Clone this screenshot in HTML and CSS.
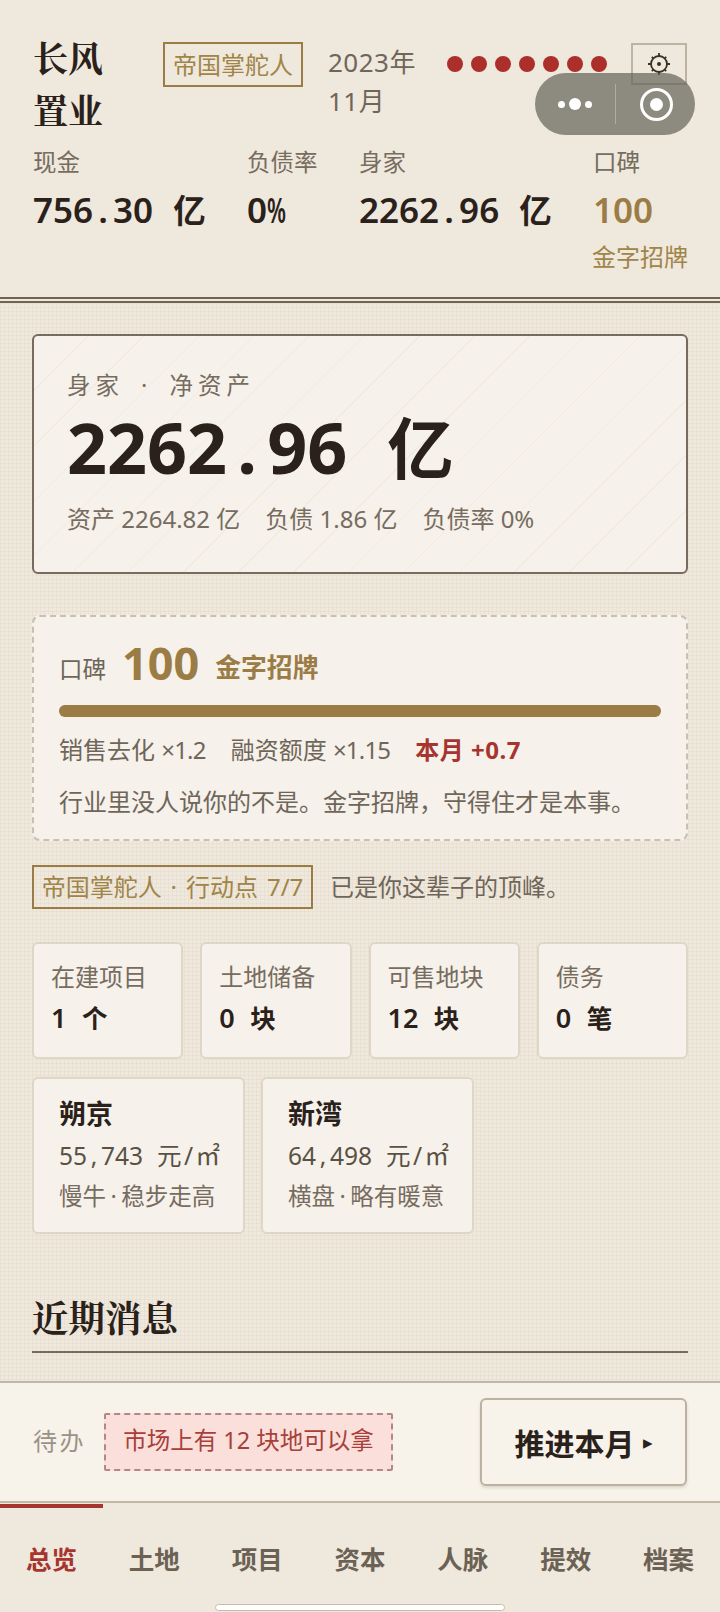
FILE: index.html
```html
<!DOCTYPE html>
<html lang="zh">
<head>
<meta charset="utf-8">
<title>长风置业</title>
<link rel="stylesheet" href="styles.css">
</head>
<body>
<div class="app">
  <header class="header">
    <div class="top">
      <h1 class="title">长风<br>置业</h1>
      <span class="rank">帝国掌舵人</span>
      <div class="date">2023年<br>11月</div>
      <div class="dots"><i></i><i></i><i></i><i></i><i></i><i></i><i></i></div>
      <button class="gear" aria-label="设置">
        <svg width="26" height="26" viewBox="0 0 26 26" fill="none" stroke="#3a3026" stroke-width="1.800"><circle cx="13" cy="13" r="8"/><circle cx="13" cy="13" r="2" fill="#3a3026" stroke="none"/><path d="M13 2v3M13 21v3M2 13h3M21 13h3M5.800 5.800l1.600 1.600M18.600 18.600l1.600 1.600M5.800 20.200l1.600-1.600M18.600 7.400l1.600-1.600"/></svg>
      </button>
    </div>
    <div class="stats">
      <div class="stat s1"><div class="lab">现金</div><div class="val">756<span class="cell">.</span>30 <span class="unit">亿</span></div></div>
      <div class="stat s2"><div class="lab">负债率</div><div class="val">0<span class="pct">%</span></div></div>
      <div class="stat s3"><div class="lab">身家</div><div class="val">2262<span class="cell">.</span>96 <span class="unit">亿</span></div></div>
      <div class="stat s4"><div class="lab">口碑</div><div class="val gold">100</div><div class="sub">金字招牌</div></div>
    </div>
  </header>
  <main class="main">
    <section class="hero">
      <div class="hero-lab">身家 · 净资产</div>
      <div class="hero-val">2262<span class="cell">.</span>96 <span class="unit">亿</span></div>
      <div class="hero-sub"><span>资产 2264.82 亿</span><span>负债 1.86 亿</span><span>负债率 0%</span></div>
    </section>
    <section class="rep">
      <div class="rep-head"><span class="rep-lab">口碑</span><span class="rep-num">100</span><span class="rep-name">金字招牌</span></div>
      <div class="bar"><div class="fill"></div></div>
      <div class="rep-row"><span>销售去化 <span class="tight">×1.2</span></span><span>融资额度 <span class="tight">×1.15</span></span><b>本月 +0.7</b></div>
      <p class="rep-desc">行业里没人说你的不是。金字招牌，守得住才是本事。</p>
    </section>
    <div class="role"><span class="role-tag">帝国掌舵人 · 行动点 7/7</span><span class="role-text">已是你这辈子的顶峰。</span></div>
    <div class="cards">
      <div class="card"><div class="card-lab">在建项目</div><div class="card-val">1 <span class="unit">个</span></div></div>
      <div class="card"><div class="card-lab">土地储备</div><div class="card-val">0 <span class="unit">块</span></div></div>
      <div class="card"><div class="card-lab">可售地块</div><div class="card-val">12 <span class="unit">块</span></div></div>
      <div class="card"><div class="card-lab">债务</div><div class="card-val">0 <span class="unit">笔</span></div></div>
    </div>
    <div class="cities">
      <div class="city"><div class="city-name">朔京</div><div class="city-price">55<span class="cell">,</span>743 元<span class="cell">/</span>㎡</div><div class="city-note">慢牛<span class="mid">·</span>稳步走高</div></div>
      <div class="city"><div class="city-name">新湾</div><div class="city-price">64<span class="cell">,</span>498 元<span class="cell">/</span>㎡</div><div class="city-note">横盘<span class="mid">·</span>略有暖意</div></div>
    </div>
    <h2 class="section">近期消息</h2>
  </main>
  <div class="todo">
    <span class="todo-lab">待办</span>
    <span class="todo-pill">市场上有 12 块地可以拿</span>
    <button class="next">推进本月<span class="arrow">▸</span></button>
  </div>
  <nav class="tabs">
    <a class="tab active">总览</a><a class="tab">土地</a><a class="tab">项目</a><a class="tab">资本</a><a class="tab">人脉</a><a class="tab">提效</a><a class="tab">档案</a>
    <span class="home"></span>
  </nav>
  <div class="capsule">
    <div class="cap-dots"><i></i><i class="big"></i><i></i></div>
    <span class="cap-line"></span>
    <div class="cap-ring"><i></i></div>
  </div>
</div>
</body>
</html>
```
FILE: styles.css
```css
* { box-sizing: border-box; margin: 0; padding: 0; }
html, body { width: 720px; height: 1612px; overflow: hidden; }
body { font-family: "Noto Sans", "Noto Sans CJK SC", sans-serif; color: #2a211a; background: #efe8dc; }
.app { position: relative; width: 720px; height: 1612px; display: flex; flex-direction: column; overflow: hidden; }

.cell { display: inline-block; width: .572em; text-align: center; }
.pct { display: inline-block; width: .572em; transform: scaleX(.62); transform-origin: left center; }
.val, .hero-val, .card-val, .city-price { white-space: pre; word-spacing: .312em; }

.header { height: 303px; flex: none; padding: 33px 33px 0; background: #efe8dc; position: relative; border-bottom: 2px solid #6f6455; }
.header::after { content: ""; position: absolute; left: 0; right: 0; bottom: 2px; height: 2px; background: #6f6455; }
.top { display: flex; align-items: flex-start; height: 110px; }
.title { font-family: "Noto Serif CJK SC", "Noto Sans CJK SC", serif; font-size: 35px; font-weight: 700; line-height: 52px; width: 130px; flex: none; margin-top: -2px; }
.rank { flex: none; margin-top: 9px; height: 45px; width: 140px; border: 2px solid #9b7c45; color: #a08448; font-size: 24px; line-height: 41px; text-align: center; white-space: nowrap; }
.date { flex: none; width: 119px; margin-left: 25px; margin-top: 10px; color: #6f665a; font-size: 26px; line-height: 39px; letter-spacing: .5px; }
.dots { flex: none; display: flex; gap: 8px; margin-top: 23px; }
.dots i { display: block; width: 16px; height: 16px; border-radius: 50%; background: #ac2f2a; }
.gear { flex: none; width: 56px; height: 42px; margin-left: 24px; margin-top: 10px; border: 2px solid #bdb3a3; background: transparent; display: flex; align-items: center; justify-content: center; }

.stats { position: relative; display: flex; }
.stat { flex: none; }
.s1 { width: 214px; }
.s2 { width: 112px; }
.s3 { width: 234px; }
.lab { font-size: 23.500px; line-height: 28px; color: #766c60; margin-top: 5px; }
.val { font-size: 35px; font-weight: 600; line-height: 46px; margin-top: 11px; }
.val .unit { font-size: 32.500px; }
.val.gold { color: #9b7c45; }
.sub { font-size: 24px; line-height: 28px; color: #a08448; margin-top: 10px; margin-left: -1px; white-space: nowrap; }

.main { flex: 1; min-height: 0; overflow: hidden; padding: 31px 32px 0; background-color: #efe8dc; background-image: linear-gradient(rgba(214,203,184,.22) 1px, transparent 1px), linear-gradient(90deg, rgba(214,203,184,.22) 1px, transparent 1px); background-size: 4px 4px; }

.hero { height: 240px; border: 2px solid #766b5c; border-radius: 6px; padding: 33px 33px 0; background-color: #f6f1ea; background-image: repeating-linear-gradient(135deg, transparent 0 38px, rgba(226,218,204,.3) 38px 39px); }
.hero-lab { font-size: 23.500px; line-height: 32px; color: #766c60; letter-spacing: 5px; word-spacing: 6px; }
.hero-val { font-size: 70px; font-weight: 700; line-height: 84px; margin-top: 4px; }
.hero-val .unit { font-size: 66.500px; }
.hero-sub { display: flex; gap: 25px; font-size: 24px; line-height: 34px; color: #766c60; margin-top: 12px; }

.rep { margin-top: 41px; height: 226px; border: 2px dashed #c9c0b1; border-radius: 8px; background: #f6f1ea; padding: 21px 25px 0; }
.rep-head { display: flex; align-items: baseline; height: 44px; }
.rep-lab { font-size: 23.500px; color: #6f665a; position: relative; top: 1px; }
.rep-num { font-size: 45px; font-weight: 700; color: #9b7c45; margin-left: 16px; line-height: 44px; position: relative; top: 3px; }
.rep-name { font-size: 25.800px; font-weight: 700; color: #9b7c45; margin-left: 16px; }
.bar { margin-top: 23px; height: 12px; border-radius: 6px; background: #e4dccd; }
.fill { width: 100%; height: 100%; border-radius: 6px; background: #9b7c45; }
.rep-row { display: flex; gap: 25px; font-size: 24px; line-height: 34px; color: #6f665a; margin-top: 16px; }
.tight { letter-spacing: -.8px; }
.rep-row b { color: #a5352e; font-weight: 700; letter-spacing: .5px; }
.rep-desc { font-size: 24px; line-height: 34px; color: #6f665a; margin-top: 18px; white-space: nowrap; }

.role { display: flex; align-items: center; gap: 17px; margin-top: 24px; }
.role-tag { height: 44px; width: 281px; border: 2px solid #9b7c45; color: #a08448; font-size: 24px; line-height: 40px; text-align: center; white-space: nowrap; word-spacing: 2.700px; }
.role-text { font-size: 24px; color: #6f665a; white-space: nowrap; margin-bottom: 4px; }

.cards { display: grid; grid-template-columns: repeat(4, 1fr); gap: 17px; margin-top: 33px; }
.card { height: 117px; border: 2px solid #ded6c7; border-radius: 6px; background: #f6f1ea; padding: 17px 17px 0; }
.card-lab { font-size: 24px; line-height: 32px; color: #766c60; }
.card-val { font-size: 27px; font-weight: 600; line-height: 34px; margin-top: 8px; }
.card-val .unit { font-size: 25.500px; }

.cities { display: flex; gap: 16px; margin-top: 18px; }
.city { width: 213px; height: 157px; border: 2px solid #ded6c7; border-radius: 6px; background: #f6f1ea; padding: 18px 25px 0; }
.city-name { font-size: 27px; font-weight: 700; line-height: 34px; }
.city-price { font-size: 24.500px; line-height: 34px; color: #5a5145; margin-top: 8px; }
.city-note { font-size: 23.500px; line-height: 34px; color: #766c60; margin-top: 6px; white-space: nowrap; }
.mid { margin: 0 4.500px; }

.section { margin-top: 58px; height: 61px; font-family: "Noto Serif CJK SC", "Noto Sans CJK SC", serif; font-size: 36.500px; font-weight: 700; line-height: 48px; border-bottom: 2px solid #766b5c; }

.todo { flex: none; height: 122px; display: flex; align-items: center; padding: 0 33px; background: #f7f2ea; border-top: 2px solid #c0b7a7; border-bottom: 2px solid #c0b7a7; }
.todo-lab { font-size: 24px; color: #9a9287; letter-spacing: 2.500px; white-space: nowrap; margin-bottom: 6px; }
.todo-pill { margin-left: 18px; width: 289px; height: 58px; border: 2px dashed #b58784; border-radius: 2px; background: #fadfdb; color: #a8403a; font-size: 23.500px; line-height: 50px; text-align: center; white-space: nowrap; }
.next { margin-left: auto; width: 207px; height: 88px; border: 2px solid #bcb2a2; border-radius: 6px; background: #f7f2ea; box-shadow: 0 2px 3px rgba(120,110,90,.2); color: #2a211a; font-family: inherit; font-size: 30px; font-weight: 700; display: flex; align-items: center; justify-content: center; }
.arrow { font-size: 19px; margin-left: 8px; font-weight: 400; }

.tabs { flex: none; height: 109px; position: relative; display: grid; grid-template-columns: repeat(7, 1fr); background: #efe8dc; }
.tab { text-align: center; font-size: 25.500px; font-weight: 700; line-height: 32px; padding-top: 40px; color: #6b6255; }
.tab.active { color: #a5352e; position: relative; }
.tab.active::before { content: ""; position: absolute; left: 0; right: 0; top: 1px; height: 4px; background: #a5352e; }
.home { position: absolute; left: 215px; top: 101px; width: 290px; height: 7px; border: 1px solid #c6bdac; border-radius: 4px; background: #fff; }

.capsule { position: absolute; left: 535px; top: 73px; width: 160px; height: 62px; border-radius: 31px; background: rgba(100,98,88,.7); display: flex; align-items: center; }
.cap-dots { width: 80px; display: flex; align-items: center; justify-content: center; gap: 4px; }
.cap-dots i { display: block; width: 7px; height: 7px; border-radius: 50%; background: #fff; }
.cap-dots i.big { width: 12px; height: 12px; }
.cap-line { width: 1px; height: 40px; background: rgba(255,255,255,.3); }
.cap-ring { margin-left: 24px; width: 33px; height: 33px; border: 3.500px solid #fff; border-radius: 50%; display: flex; align-items: center; justify-content: center; }
.cap-ring i { display: block; width: 13px; height: 13px; border-radius: 50%; background: #fff; }
```
